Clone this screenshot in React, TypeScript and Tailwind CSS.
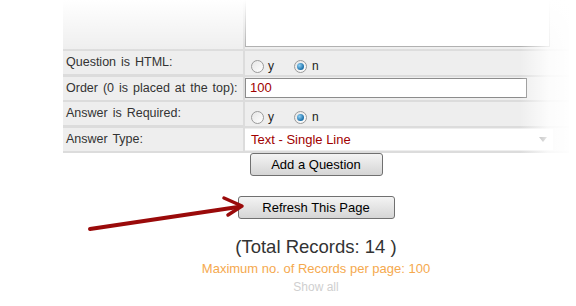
import React from "react";

function Radio({ on }: { on?: boolean }) {
  return (
    <span className="inline-flex h-[13px] w-[13px] items-center justify-center rounded-full border border-[#9a9a9a] bg-gradient-to-br from-[#e6e6e6] to-[#ffffff]">
      {on && <span className="h-[7px] w-[7px] rounded-full bg-[radial-gradient(circle_at_35%_35%,#8fd0f5,#1b6fa8_70%)]" />}
    </span>
  );
}

function YesNo() {
  return (
    <div className="flex items-center pt-[6px] pl-[6px] text-[12px] text-[#222]">
      <Radio />
      <span className="ml-[4px]">y</span>
      <span className="ml-[20px]" />
      <Radio on />
      <span className="ml-[5px]">n</span>
    </div>
  );
}

const label =
  "whitespace-nowrap bg-[#eeeeee] pl-[3px] pt-[2px] text-[12.5px] text-[#333] [word-spacing:1.5px]";
const btn =
  "rounded-[3px] border border-[#707070] bg-gradient-to-b from-[#f4f4f4] to-[#d5d5d5] text-[13px] text-black";

export default function App() {
  return (
    <div className="relative h-[306px] w-[576px] overflow-hidden bg-white font-['Liberation_Sans',Arial,sans-serif]">
      <div className="ml-[63px] w-[506px]">
        <div className="-mt-[32px] grid grid-cols-[180px_1fr] gap-[2px] bg-[#dcdcdc] pb-[2px]">
          <div className="h-[81px] bg-[#eeeeee]" />
          <div className="bg-[#eeeeee] pt-[1px]">
            <div className="h-[78px] w-[305px] border border-[#a8a8a8] bg-white" />
          </div>

          <div className={`${label} h-[23px]`}>Question is HTML:</div>
          <div className="bg-[#eeeeee]">
            <YesNo />
          </div>

          <div className={`${label} h-[23px]`}>Order (0 is placed at the top):</div>
          <div className="bg-[#eeeeee] pt-[1px]">
            <div className="h-[20px] w-[282px] border border-[#8c8c8c] bg-white pl-[4px] text-[13px] leading-[18px] text-[#a00000]">
              100
            </div>
          </div>

          <div className={`${label} h-[23px]`}>Answer is Required:</div>
          <div className="bg-[#eeeeee]">
            <YesNo />
          </div>

          <div className={`${label} h-[23px]`}>Answer Type:</div>
          <div className="bg-[#eeeeee] pt-[1px]">
            <div className="flex h-[21px] w-[308px] items-center justify-between bg-white pl-[6px] pr-[6px] text-[13px] text-[#a00000]">
              <span>Text - Single Line</span>
              <span className="h-0 w-0 border-x-[4px] border-t-[5px] border-x-transparent border-t-[#888]" />
            </div>
          </div>
        </div>

        <div className="flex flex-col items-center">
          <button className={`${btn} h-[23px] w-[133px]`}>Add a Question</button>
          <button className={`${btn} mt-[20px] h-[23px] w-[157px]`}>Refresh This Page</button>
          <div className="mt-[17px] text-[18.5px] leading-[22px] text-[#333]">(Total Records: 14 )</div>
          <div className="mt-[3px] text-[13px] leading-[15px] text-[#f5a94e]">Maximum no. of Records per page: 100</div>
          <div className="mt-[4px] text-[12px] leading-[14px] text-[#cfcfcf]">Show all</div>
        </div>
      </div>

      <svg className="absolute left-0 top-0" width="576" height="306" viewBox="0 0 576 306">
        <line x1="90" y1="229" x2="238" y2="207" stroke="#9a0a0a" strokeWidth="4" strokeLinecap="round" />
        <polyline points="224,198 242,206 228,215" fill="none" stroke="#9a0a0a" strokeWidth="3.5" strokeLinecap="round" strokeLinejoin="round" />
      </svg>

      <div className="absolute inset-x-0 top-0 h-[52px] bg-gradient-to-b from-white via-white/50 to-transparent" />
      <div className="absolute inset-y-0 right-0 w-[56px] bg-gradient-to-r from-transparent via-white/80 to-white" />
    </div>
  );
}
